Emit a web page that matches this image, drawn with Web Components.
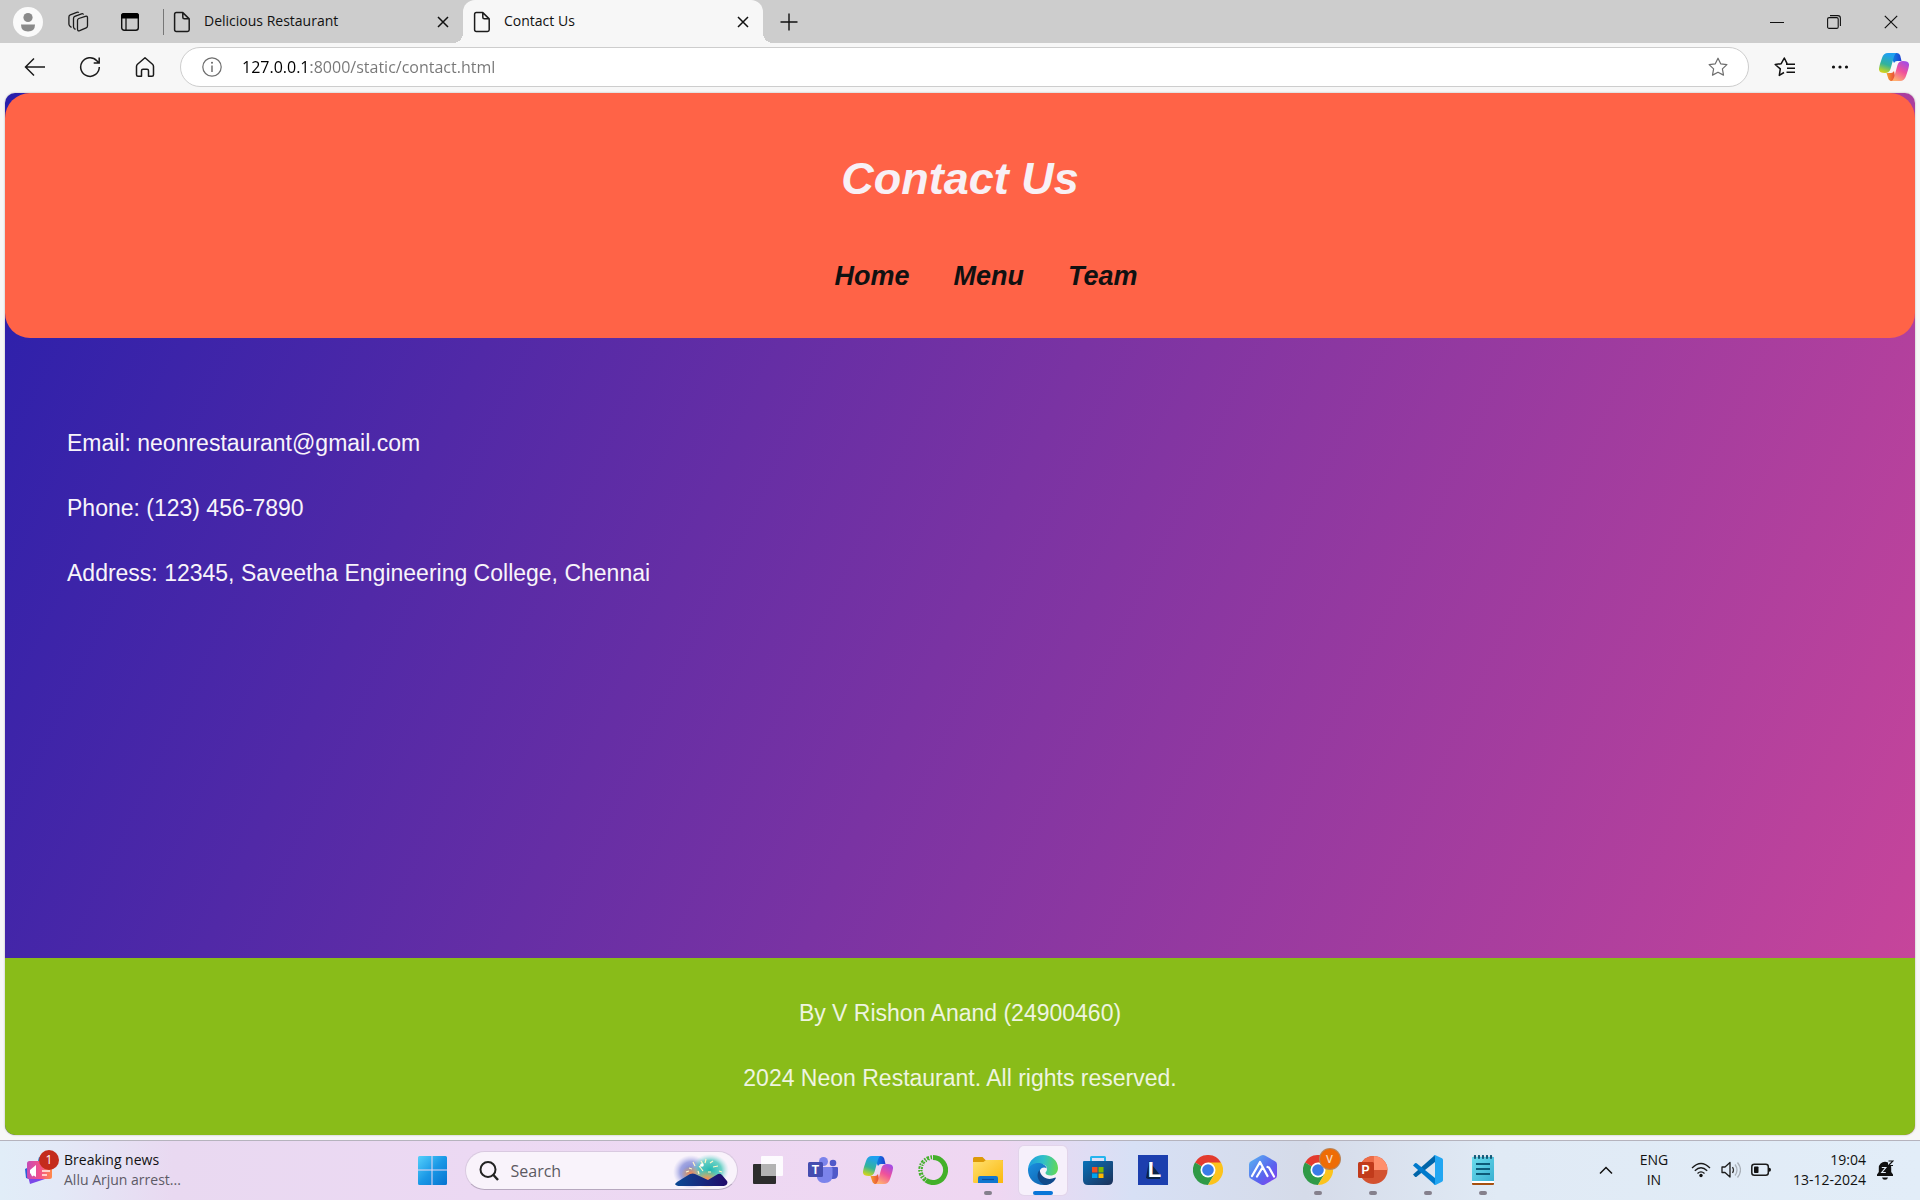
<!DOCTYPE html>
<html lang="en">
<head>
<meta charset="utf-8">
<title>Contact Us</title>
<style>
html,body{height:100%}
body{margin:0;font-family:"Open Sans","Noto Sans",sans-serif;color:#111;background:#f7f7f7;overflow:hidden}
</style>
</head>
<body>
<desktop-screen></desktop-screen>
<script>
const ICONS = {
  profile:[30,30,'<circle cx="15" cy="15" r="15" fill="#fafafa"/><circle cx="15" cy="10.500" r="4.600" fill="#8a8a8a"/><path d="M8 17.500h14q0 7-7 7t-7-7z" fill="#8a8a8a"/>'],
  collections:[22,22,'<g fill="none" stroke="#1b1b1b" stroke-width="1.300" stroke-linejoin="round"><path d="M10.500 9.500q0-1.500 1.300-2l6.500-2.200q2.200-.6 2.200 1.500v8q0 1.500-1.300 2l-6.500 2.800q-2.200.8-2.200-1.500z"/><path d="M8.500 18.500l-1.200-1q-.8-.7-.8-2v-8q0-1.500 1.300-2.100l6.700-2.600q1.600-.5 2 .8"/><path d="M4.500 16.500l-1.700-1.400q-.9-.8-.9-2V6q0-1.600 1.400-2.200l6.500-2.500q1.400-.4 2 .3"/></g>'],
  tabmenu:[20,20,'<rect x="1.700" y="1.700" width="16.600" height="16.600" rx="2.500" fill="none" stroke="#111" stroke-width="1.400"/><path d="M1 6.500V3.500Q1 1 3.500 1h13Q19 1 19 3.500v3z" fill="#000"/><path d="M6 6v12" stroke="#111" stroke-width="1.300"/>'],
  file:[18,22,'<path d="M3.300 1.600h6.500l6.400 6.300v10.800q0 1.700-1.700 1.700H3.300q-1.700 0-1.700-1.700V3.300q0-1.700 1.700-1.700zM9.800 1.800v4.500q0 1.500 1.500 1.500h4.700" fill="none" stroke="#1b1b1b" stroke-width="1.500" stroke-linejoin="round"/>'],
  close:[12,12,'<path d="M1 1l10 10M11 1L1 11" stroke="#111" stroke-width="1.500"/>'],
  plus:[18,18,'<path d="M9 .5v17M.5 9h17" stroke="#111" stroke-width="1.400"/>'],
  min:[14,14,'<path d="M0 7.500h14" stroke="#111"/>'],
  restore:[14,14,'<rect x=".6" y="2.600" width="10.600" height="10.800" rx="1.500" fill="none" stroke="#111" stroke-width="1.100"/><path d="M3 .6h7.800q2.600 0 2.600 2.600V11" fill="none" stroke="#111" stroke-width="1.100"/>'],
  winclose:[14,14,'<path d="M.8.8l12.400 12.400M13.200.8L.8 13.200" stroke="#111" stroke-width="1.200"/>'],
  back:[22,20,'<path d="M10 1.500L1.500 10l8.500 8.500M1.500 10H21" fill="none" stroke="#1b1b1b" stroke-width="1.500"/>'],
  reload:[22,22,'<path d="M20.300 11A9.300 9.300 0 1 1 17.800 4.700L20 7M20.200 1.500V7h-5.500" fill="none" stroke="#1b1b1b" stroke-width="1.500"/>'],
  home:[20,22,'<path d="M10 1.700l7.500 6.500q1 .9 1 2.200v8.300q0 1.500-1.500 1.500h-3.500v-5.500q0-1.500-1.500-1.500H8q-1.500 0-1.500 1.500v5.500H3q-1.500 0-1.500-1.500v-8.300q0-1.300 1-2.200z" fill="none" stroke="#1b1b1b" stroke-width="1.500" stroke-linejoin="round"/>'],
  info:[20,20,'<circle cx="10" cy="10" r="9.200" fill="none" stroke="#6e6e6e" stroke-width="1.200"/><path d="M10 8.500v6.500" stroke="#666" stroke-width="1.400"/><circle cx="10" cy="5.800" r="1" fill="#666"/>'],
  star:[20,20,'<path d="M10 1.200l2.700 5.600 6.200.8-4.500 4.300 1.100 6.200L10 15.200l-5.500 2.900 1.100-6.200L1.100 7.600l6.200-.8z" fill="none" stroke="#6e6e6e" stroke-width="1.200" stroke-linejoin="round"/>'],
  favs:[22,20,'<path d="M10 15.500L5.300 18.400l1-6.500L1.200 7.500l6-.8L10.300 1l2.800 5.700M12 7.200h9M13 11.200h8M12.500 15.200h8.500" fill="none" stroke="#111" stroke-width="1.500" stroke-linejoin="round"/>'],
  dots:[18,6,'<g fill="#111"><circle cx="2.500" cy="3" r="1.600"/><circle cx="9" cy="3" r="1.600"/><circle cx="15.500" cy="3" r="1.600"/></g>'],
  copilot:[30,28,'<defs><linearGradient id="a" x1=".3" y1="0" x2="0" y2="1"><stop offset="0" stop-color="#1fa0f0"/><stop offset=".5" stop-color="#33b39a"/><stop offset=".8" stop-color="#a9cf38"/><stop offset="1" stop-color="#f5d20a"/></linearGradient><linearGradient id="b" x1=".8" y1="0" x2=".3" y2="1"><stop offset="0" stop-color="#a04be8"/><stop offset=".5" stop-color="#f0519b"/><stop offset="1" stop-color="#ffb070"/></linearGradient><linearGradient id="c"><stop offset="0" stop-color="#0a9be8"/><stop offset="1" stop-color="#1d3fd1"/></linearGradient><linearGradient id="d"><stop offset="0" stop-color="#f6a030"/><stop offset="1" stop-color="#e6403a"/></linearGradient></defs><path d="M10 0h8q2.500 0 3.200 2.500L22.500 8H18q-2 0-3 2z" fill="url(#c)"/><path d="M7.500 20H12q2 0 3-2L17 28h-4q-3 0-3.800-2.800z" fill="url(#d)"/><path d="M9 0h8.500q-1.700.8-2.500 3.600L11.500 16q-1.200 4-5.500 4-6.500 0-6-4.500.3-2 1-4.500L3 5Q4.500 0 9 0z" fill="url(#a)"/><path d="M21 28h-8.500q1.700-.8 2.500-3.600L18.500 12q1.200-4 5.500-4 6.500 0 6 4.500-.3 2-1 4.500l-2 6q-1.500 5-6 5z" fill="url(#b)"/>'],
  news:[30,30,'<defs><linearGradient id="n"><stop offset="0" stop-color="#c54bb5"/><stop offset=".5" stop-color="#f2508c"/><stop offset="1" stop-color="#ff8a4a"/></linearGradient></defs><path d="M14 2l12 4-2 8-12-4z" fill="#1678d8"/><path d="M0 14l4-2v12l-3-1z" fill="#2a5fd8"/><path d="M3 21h19l1 2-18 6z" fill="#7b48e8"/><rect x="2" y="6" width="25" height="18" rx="2.500" fill="url(#n)"/><path d="M5 15l6-5v12l-6-4z" fill="#fff"/><path d="M6 17l2 4" stroke="#fff" stroke-width="2"/><path d="M17 16h8M17 20h5" stroke="#ffd2cc" stroke-width="1.800"/>'],
  start:[30,30,'<defs><linearGradient id="s" x1="0" y1="0" x2="1" y2="1"><stop offset="0" stop-color="#55d0fb"/><stop offset=".5" stop-color="#1a98e6"/><stop offset="1" stop-color="#0673d0"/></linearGradient></defs><path d="M2.500 1H14.500V14.500H1V2.500Q1 1 2.500 1zM15.500 1h13Q30 1 30 2.500v12H15.500zM1 15.500h13.500V30h-12Q1 30 1 28.500zM15.500 15.500H30v13q0 1.500-1.500 1.500h-13z" fill="url(#s)"/>'],
  search:[20,20,'<circle cx="9" cy="8.500" r="7.500" fill="none" stroke="#222" stroke-width="2"/><path d="M14 13.500l5 5.500" stroke="#222" stroke-width="2.400"/>'],
  fireworks:[56,34,'<defs><radialGradient id="f1"><stop offset="0" stop-color="#6f7bd0"/><stop offset=".6" stop-color="#8b92da" stop-opacity=".8"/><stop offset="1" stop-color="#b8b8ec" stop-opacity="0"/></radialGradient><radialGradient id="f2"><stop offset="0" stop-color="#23b8b0"/><stop offset=".6" stop-color="#45c8b8" stop-opacity=".8"/><stop offset="1" stop-color="#a0e0e0" stop-opacity="0"/></radialGradient><radialGradient id="f3"><stop offset="0" stop-color="#ff8a50"/><stop offset="1" stop-color="#e8b040" stop-opacity="0"/></radialGradient><linearGradient id="f4"><stop offset="0" stop-color="#0c4a94"/><stop offset="1" stop-color="#220b6a"/></linearGradient></defs><ellipse cx="18" cy="18" rx="18" ry="17" fill="url(#f1)"/><ellipse cx="37" cy="16" rx="19" ry="16" fill="url(#f2)"/><ellipse cx="34" cy="25" rx="12" ry="9" fill="url(#f3)"/><ellipse cx="18" cy="20" rx="10" ry="8" fill="url(#f3)"/><path d="M20 8l2 4M16 14l3 1M26 13l4-3M30 17l-3-4M33 5l-1 4M37 9l3-2M40 13l5-1M28 7l2 3M35 18h3M46 17l3 1M13 18l3-1M25 17l1 3" stroke="#fff6c8" stroke-width="1.200"/><circle cx="29" cy="11" r="1.800" fill="#fff"/><path d="M2 30l2-2 13-8q3-1 5 0l13 6 10-6q2-1 4 1l5 6q1 2 0 3-1 2-5 2H7q-4 0-5-2z" fill="url(#f4)"/>'],
  taskview:[30,30,'<rect x="0" y="9" width="23" height="20" rx="1" fill="#2d2d2d"/><rect x="8" y="1" width="22" height="20" rx="1" fill="#fff" opacity=".88"/><rect x="8" y="9" width="15" height="12" fill="#b3b3b3"/>'],
  teams:[30,30,'<circle cx="25" cy="8" r="3.300" fill="#5059c9"/><path d="M20 12h9q1 0 1 1v6q0 5-5 5h-3z" fill="#5059c9"/><circle cx="15.500" cy="6.500" r="4.500" fill="#7b83eb"/><path d="M10 12h13q1.500 0 1.500 1.500V20q0 8-8 8-6 0-7.500-5z" fill="#7b83eb"/><rect x="0" y="7" width="15" height="15" rx="1.500" fill="#454db0"/><text x="7.500" y="19" text-anchor="middle" font-size="12" font-weight="700" fill="#fff" font-family="Liberation Sans">T</text>'],
  anaconda:[30,30,'<path d="M15 2.500a12.500 12.500 0 1 1-7 22.800" fill="none" stroke="#43b02a" stroke-width="5"/><path d="M7.500 25A12.500 12.500 0 0 1 15 2.500" fill="none" stroke="#43b02a" stroke-width="4.500" stroke-dasharray="2.500 1.200 1.500 1"/><path d="M9 22A9.500 9.500 0 0 1 14 5" fill="none" stroke="#eed9f3" stroke-width="1.300" stroke-dasharray="2 1.500"/><path d="M6 23.500A12 12 0 0 1 13 3" fill="none" stroke="#eed9f3" stroke-width=".9" stroke-dasharray="1.500 2"/>'],
  explorer:[30,30,'<defs><linearGradient id="e" x1="0" y1="0" x2="1" y2="1"><stop offset="0" stop-color="#ffe070"/><stop offset="1" stop-color="#fbb80c"/></linearGradient></defs><path d="M0 3.500Q0 2 1.500 2h8l3 3H30v6H0z" fill="#dd9a08"/><path d="M0 7h10.500l2.500-2h16Q30 5 30 6v22H1.500Q0 28 0 27z" fill="url(#e)"/><path d="M5 28v-5q0-2 2-2h16q2 0 2 2v5z" fill="#1177d0"/><path d="M9 24.500h12" stroke="#0a4f9c" stroke-width="1.200"/>'],
  edge:[30,30,'<defs><linearGradient id="g1" x1="0" y1=".4" x2="1" y2=".5"><stop offset="0" stop-color="#1d9de0"/><stop offset=".5" stop-color="#30c0c8"/><stop offset="1" stop-color="#62d857"/></linearGradient><linearGradient id="g2" x1="0" y1="0" x2="1" y2="1"><stop offset="0" stop-color="#1b8fe0"/><stop offset="1" stop-color="#0c59a4"/></linearGradient></defs><path d="M0 14C1 5 7.500 0 15 0c9 0 15 6 15 13 0 5-3.500 7.500-7.500 7.500-3 0-5-1-5-2.500s1.500-1.500 1.500-4c0-2.500-2-5-6-5C7 9 1.500 11 0 17z" fill="url(#g1)"/><path d="M0 15c1.500-4.500 5.500-7 10.500-7 4 0 8 2.500 8.200 5.500-2-2-6.700-1-7.200 3.500-.5 4.500 3 8.500 8.500 8.500 4 0 6-1.500 7.500-2-2.500 4.500-7 6.500-12 6.500C6.500 30 0 23.500 0 15z" fill="url(#g2)"/><path d="M11.600 15c-4 4.500-2 12 4.900 14.900 5 0 9-2.500 11.200-6.500.3-.8-.3-1-1-.6-7 3.200-14-.8-15.100-7.800z" fill="#114a8b"/>'],
  store:[30,30,'<defs><linearGradient id="t" x1="0" y1="0" x2="1" y2="1"><stop offset="0" stop-color="#0a72ba"/><stop offset="1" stop-color="#1c3058"/></linearGradient></defs><path d="M8 8V2.500Q8 2 8.500 2h13q.5 0 .5.500V8" fill="none" stroke="#25b5ee" stroke-width="2"/><path d="M1 6h28q1 0 1 1v18q0 5-5 5H5q-5 0-5-5V7q0-1 1-1z" fill="url(#t)"/><path d="M9 12h5.500v5.500H9z" fill="#f25022"/><path d="M15.500 12H20.500v5.500h-5z" fill="#7fba00"/><path d="M9 18.500h5.500V23H9z" fill="#00a4ef"/><path d="M15.500 18.500h5V23h-5z" fill="#ffb900"/>'],
  lapp:[30,30,'<path d="M0 0h30v30H0z" fill="#1c3fae"/><path d="M11 6l-3 17 2 1h12v-4" fill="#0c2347"/><text x="16.500" y="22" text-anchor="middle" font-size="22" font-weight="700" fill="#fff" font-family="Liberation Sans">L</text>'],
  chrome:[30,30,'<path d="M15 15L2 7.500A15 15 0 0 1 28 7.500z" fill="#e33b2e"/><path d="M15 15L2 7.500A15 15 0 0 0 15 30l6.500-11z" fill="#2f9a47"/><path d="M15 7.500h13A15 15 0 0 1 15 30l6.500-11z" fill="#fcc31c"/><circle cx="15" cy="15" r="7.500" fill="#fff"/><circle cx="15" cy="15" r="5.800" fill="#3a7be8"/>'],
  aapp:[30,30,'<defs><linearGradient id="h" x1="0" y1="0" x2="1" y2="1"><stop offset="0" stop-color="#58b8f2"/><stop offset=".6" stop-color="#5a62ee"/><stop offset="1" stop-color="#8a3df0"/></linearGradient></defs><path d="M13 .6q2-1.100 4 0l10 5.600q2 1.100 2 3.300v11q0 2.200-2 3.300l-10 5.600q-2 1.100-4 0L3 23.800q-2-1.100-2-3.300v-11q0-2.200 2-3.300z" fill="url(#h)"/><path d="M4 21L12 7l7.500 14M9 21.500l5.500-9M19.500 12l1.500.5 5 9" fill="none" stroke="#fff" stroke-width="2.200" stroke-linecap="round" stroke-linejoin="round"/>'],
  ppt:[30,30,'<circle cx="15.500" cy="15" r="14" fill="#d35230"/><path d="M15.500 1a14 14 0 0 1 14 14h-14z" fill="#ff8f6b"/><path d="M15.500 1v14h-14a14 14 0 0 1 14-14z" fill="#ed6c47"/><rect x="0" y="7" width="16" height="16" rx="1.500" fill="#c13b1b"/><text x="7.500" y="19" text-anchor="middle" font-size="12" font-weight="700" fill="#fff" font-family="Liberation Sans">P</text>'],
  vscode:[30,30,'<path d="M0 19.500l2 2.300q.8.600 1.600 0L22 7V0z" fill="#0065a9"/><path d="M0 10.500l2-2.300q.8-.6 1.600 0L22 23v7z" fill="#007acc"/><path d="M21 .5q1-.8 2 0l6 2.800q1 .5 1 1.700v20q0 1.200-1 1.700l-6 3q-1.500.6-2.500-.5 1.500.5 1.500-1.200V2q0-1.500-1.500-1z" fill="#22a6f2"/>'],
  notepad:[30,30,'<defs><linearGradient id="o" x1="0" y1="0" x2="1" y2="1"><stop offset="0" stop-color="#6bdcec"/><stop offset="1" stop-color="#39b0d2"/></linearGradient></defs><path d="M4 26h22v3q0 1-1 1H5q-1 0-1-1z" fill="#a6500f"/><path d="M4 25h22v3H4z" fill="#fff"/><path d="M4 2h22v24H4z" fill="url(#o)"/><path d="M8 9h14M8 14h14M8 19h14" stroke="#0d5a78" stroke-width="1.800"/><path d="M7 1v2M11 1v2M15 1v2M19 1v2M23 1v2" stroke="#155a78" stroke-width="2.200" stroke-linecap="round"/>'],
  up:[14,10,'<path d="M1 8.500l6-6 6 6" fill="none" stroke="#111" stroke-width="1.500"/>'],
  wifi:[20,16,'<g fill="none" stroke="#1b1b1b" stroke-width="1.300"><path d="M1 6q9-9 18 0M3.800 8.800q6.200-6 12.400 0M6.500 11.500q3.500-3.300 7 0"/></g><circle cx="10" cy="13.500" r="1.700" fill="#111"/>'],
  volume:[20,18,'<path d="M1 6h3l5-4.500v14.500L4 11.500H1z" fill="none" stroke="#1b1b1b" stroke-width="1.300" stroke-linejoin="round"/><path d="M11.500 6q2 3 0 6" fill="none" stroke="#333" stroke-width="1.300"/><path d="M14 3.500q4 5.500 0 11M16.500 1.500q6 7.500 0 15" fill="none" stroke="#a9b0b8" stroke-width="1.300"/>'],
  battery:[20,14,'<rect x=".8" y="1.300" width="16.500" height="11" rx="2.500" fill="none" stroke="#1b1b1b" stroke-width="1.500"/><rect x="3" y="3.500" width="4.500" height="6.600" rx=".8" fill="#111"/><path d="M18 4.800q2 0 2 2t-2 2z" fill="#111"/>'],
  bell:[18,20,'<path d="M1 16h16v-1.500l-1.800-2.500V8A6.200 6.200 0 0 0 2.800 8v4L1 14.500zM6 17.500h6q-.5 2.300-3 2.300t-3-2.300z" fill="#111"/><path d="M12 0h6v6h-6z" fill="#e2edf8"/><path d="M12.500 1h4.500l-4.500 4.500h4.500" fill="none" stroke="#111" stroke-width="1.200"/><path d="M5.800 7.500h4l-4 5h4" fill="none" stroke="#e2edf8" stroke-width="1.200"/>']
};

function define(name, html, setup){
  customElements.define(name, class extends HTMLElement{
    constructor(){ super(); this.attachShadow({mode:'open'}); }
    connectedCallback(){
      this.shadowRoot.innerHTML = typeof html === 'function' ? html(this) : html;
      if(setup) setup(this);
    }
  });
}

const resetButton = 'button{font:inherit;color:inherit;background:none;border:0;padding:0;margin:0;display:flex;align-items:center;justify-content:center}';

define('ui-icon', el => {
  const [w,h,body] = ICONS[el.getAttribute('name')];
  return `<style>:host{display:block;flex:none}svg{display:block}</style><svg width="${w}" height="${h}" viewBox="0 0 ${w} ${h}" aria-hidden="true">${body}</svg>`;
});

define('icon-button', el => `<style>:host{display:flex;flex:none;width:55px;height:100%}${resetButton}button{width:100%;height:100%}</style>
  <button aria-label="${el.getAttribute('label')}"><ui-icon name="${el.getAttribute('icon')}"></ui-icon></button>`);

define('browser-tab', `<style>
  :host{display:flex;align-items:center;height:43px;width:300px;box-sizing:border-box;padding:0 14px 0 10px;position:relative;font-size:14px}
  :host([active]){background:#f7f7f7;border-radius:12px 12px 0 0}
  :host([active])::before,:host([active])::after{content:"";position:absolute;bottom:0;width:10px;height:10px}
  :host([active])::before{right:100%;background:radial-gradient(circle at 0 0,transparent 10px,#f7f7f7 10px)}
  :host([active])::after{left:100%;background:radial-gradient(circle at 100% 0,transparent 10px,#f7f7f7 10px)}
  ${resetButton}
  .title{flex:1;justify-content:flex-start;gap:13px;height:100%;white-space:nowrap;line-height:20px}
  .label{padding-bottom:2px}
  </style>
  <button class="title" role="tab"><ui-icon name="file"></ui-icon><span class="label"><slot></slot></span></button>
  <button aria-label="Close tab"><ui-icon name="close"></ui-icon></button>`);

define('tab-strip', `<style>
  :host{display:flex;align-items:center;height:43px;flex:none;background:#cdcdcd;padding-left:3px}
  .sep{width:1px;height:26px;background:#777;margin-left:7px}
  .tabs{display:flex;margin-right:-2px;margin-left:-1px}
  .gap{flex:1}
  .win{display:flex;height:100%;gap:2px;padding-right:2px}
  </style>
  <icon-button icon="profile" label="Profile" style="width:50px"></icon-button>
  <icon-button icon="collections" label="Workspaces" style="width:50px"></icon-button>
  <icon-button icon="tabmenu" label="Tab actions" style="width:53px"></icon-button>
  <div class="sep"></div>
  <div class="tabs"><browser-tab>Delicious Restaurant</browser-tab><browser-tab active>Contact Us</browser-tab></div>
  <icon-button icon="plus" label="New tab"></icon-button>
  <div class="gap"></div>
  <div class="win"><icon-button icon="min" label="Minimize"></icon-button><icon-button icon="restore" label="Restore"></icon-button><icon-button icon="winclose" label="Close"></icon-button></div>`);

define('address-bar', `<style>
  :host{display:flex;flex:1;min-width:0}
  label{display:flex;flex:1;align-items:center;height:40px;box-sizing:border-box;background:#fff;border:1px solid #cdcdcd;border-radius:20px;padding:0 3px 0 21px;gap:20px}
  input{flex:1;min-width:0;border:0;outline:0;padding:0;font:inherit;font-size:16px;height:24px;color:#111;background:linear-gradient(90deg,#000 69px,#767676 69px);-webkit-background-clip:text;background-clip:text;-webkit-text-fill-color:transparent}
  </style>
  <label><ui-icon name="info"></ui-icon><input aria-label="Address" value="127.0.0.1:8000/static/contact.html"><icon-button icon="star" label="Add to favorites"></icon-button></label>`);

define('browser-toolbar', `<style>
  :host{display:flex;align-items:center;height:48px;padding-bottom:2px;flex:none;background:#f7f7f7;padding-left:7px}
  nav,.tools{display:flex;height:100%}
  nav{margin-right:8px}.tools{margin-left:8px}
  </style>
  <nav><icon-button icon="back" label="Back"></icon-button><icon-button icon="reload" label="Refresh"></icon-button><icon-button icon="home" label="Home"></icon-button></nav>
  <address-bar></address-bar>
  <div class="tools"><icon-button icon="favs" label="Favorites"></icon-button><icon-button icon="dots" label="Settings and more"></icon-button><icon-button icon="copilot" label="Copilot" style="width:53px"></icon-button></div>`);

define('site-header', `<style>
  :host{display:block;background:#ff6347;border-radius:25px;padding:60px 0 46px;text-align:center;font-weight:700;font-style:italic}
  h1{margin:0 0 56px;font-size:45px;line-height:52px;color:#f8f0f5}
  ul{display:flex;justify-content:center;gap:44px;list-style:none;margin:0;padding:0 0 0 52px;font-size:27px;line-height:31px}
  a{color:#111;text-decoration:none}
  </style>
  <h1><slot></slot></h1>
  <nav><ul><li><a href="#home">Home</a></li><li><a href="#menu">Menu</a></li><li><a href="#team">Team</a></li></ul></nav>`);

define('contact-details', `<style>
  :host{display:flex;flex:1;flex-direction:column;gap:38px;padding:92px 62px 0;color:#f8f4fa;font-size:23px;line-height:27px}
  p{margin:0}
  </style>
  <p>Email: neonrestaurant@gmail.com</p><p>Phone: (123) 456-7890</p><p>Address: 12345, Saveetha Engineering College, Chennai</p>`);

define('site-footer', `<style>
  :host{display:flex;flex-direction:column;gap:38px;padding:42px 0 43px;background:#89bc19;color:#eef4e0;font-size:23px;line-height:27px;text-align:center}
  p{margin:0}
  </style>
  <p>By V Rishon Anand (24900460)</p><p>2024 Neon Restaurant. All rights reserved.</p>`);

define('contact-page', `<style>
  :host{display:flex;flex-direction:column;flex:1;min-height:0;margin:0 5px 5px;border-radius:10px;overflow:hidden;font-family:"Liberation Sans",Arial,sans-serif;background:linear-gradient(115deg,#281fab,#7a33a3 50%,#cc469a);box-shadow:0 0 2px #aaa}
  </style>
  <site-header>Contact Us</site-header><contact-details></contact-details><site-footer></site-footer>`);

define('task-app', el => `<style>
  :host{display:flex;width:55px;height:59px;flex:none;justify-content:center;position:relative}
  ${resetButton}
  button{width:48px;height:49px;box-sizing:border-box;padding-bottom:1px;margin:5px 0;border-radius:5px;position:relative}
  :host([active]) button{background:#f6f0fb;box-shadow:0 0 0 1px #e2d4ea}
  :host([running]) button::after{content:"";position:absolute;bottom:0;left:50%;width:8px;height:4px;margin-left:-4px;border-radius:2px;background:#85808c}
  :host([active]) button::after{width:20px;margin-left:-10px;background:#0a76d8}
  .badge{position:absolute;right:6px;top:8px;width:20px;height:20px;border-radius:50%;background:#ee6c05;color:#fbd9bd;font-size:11px;line-height:20px;font-weight:600;text-align:center;box-shadow:0 0 0 1px #b9855a}
  </style><button aria-label="${el.getAttribute('label')}"><ui-icon name="${el.getAttribute('icon')}"></ui-icon></button>${el.hasAttribute('badge')?`<span class="badge">${el.getAttribute('badge')}</span>`:''}`);

define('news-widget', `<style>
  :host{display:flex;align-items:center;justify-self:start;padding:0 0 2px 25px}
  ${resetButton}
  button{gap:9px;text-align:left}
  .pic{position:relative}
  .count{position:absolute;left:14px;top:-5px;width:20px;height:20px;border-radius:50%;background:#c42b1c;color:#fff;font-size:12px;line-height:20px;text-align:center}
  .text{display:block;font-size:14px;line-height:20px;white-space:nowrap}
  .sub{display:block;color:#5d5a66}
  </style>
  <button><span class="pic"><ui-icon name="news"></ui-icon><span class="count">1</span></span><span class="text">Breaking news<span class="sub">Allu Arjun arrest...</span></span></button>`);

define('task-search', `<style>
  :host{display:flex;align-items:center}
  label{display:flex;align-items:center;box-sizing:border-box;width:273px;height:39px;border:1px solid #d9c9e0;border-bottom-color:#b7a8bf;border-radius:20px;background:#f9f3fb;padding:0 8px 0 13px;gap:12px}
  input{flex:1;min-width:0;border:0;outline:0;background:none;padding:0;font:inherit;font-size:16px;color:#555}
  input::placeholder{color:#5c5962;opacity:1}
  </style>
  <label><ui-icon name="search"></ui-icon><input type="text" aria-label="Search" placeholder="Search"><ui-icon name="fireworks"></ui-icon></label>`);

define('system-tray', `<style>
  :host{display:flex;align-items:center;justify-self:end;padding:0 26px 2px 0;font-size:14px;line-height:20px}
  ${resetButton}
  .lang{margin-left:26px;width:30px;text-align:center;display:block}
  .status{margin-left:22px;gap:10px}
  .clock{margin-left:22px;display:block;text-align:right;white-space:nowrap}
  .bell{margin-left:10px}
  </style>
  <button aria-label="Show hidden icons"><ui-icon name="up"></ui-icon></button>
  <button class="lang">ENG<br>IN</button>
  <button class="status" aria-label="Network, sound, battery"><ui-icon name="wifi"></ui-icon><ui-icon name="volume"></ui-icon><ui-icon name="battery"></ui-icon></button>
  <button class="clock">19:04<br>13-12-2024</button>
  <button class="bell" aria-label="Notifications"><ui-icon name="bell"></ui-icon></button>`);

define('task-bar', `<style>
  :host{display:grid;grid-template-columns:1fr auto 1fr;height:59px;flex:none;border-top:1px solid #b5b3bd;background:linear-gradient(90deg,#e1edf8,#e3e9f7 3%,#e9d9f1 9%,#ecd9f3 25%,#efd7f2 52%,#d7e0f5 59%,#d5dbe9 68%,#e0eaf5 78%,#e2edf8)}
  .apps{display:flex;padding-right:5px}
  task-search{margin:0 3px 0 5px}
  </style>
  <news-widget></news-widget>
  <div class="apps">
  <task-app icon="start" label="Start"></task-app><task-search></task-search>
  <task-app icon="taskview" label="Task view"></task-app><task-app icon="teams" label="Teams"></task-app><task-app icon="copilot" label="Copilot"></task-app><task-app icon="anaconda" label="Anaconda"></task-app><task-app icon="explorer" label="File Explorer" running></task-app><task-app icon="edge" label="Edge" running active></task-app><task-app icon="store" label="Store"></task-app><task-app icon="lapp" label="L"></task-app><task-app icon="chrome" label="Chrome"></task-app><task-app icon="aapp" label="App"></task-app><task-app icon="chrome" label="Chrome profile" badge="V" running></task-app><task-app icon="ppt" label="PowerPoint" running></task-app><task-app icon="vscode" label="Visual Studio Code" running></task-app><task-app icon="notepad" label="Notepad" running></task-app>
  </div>
  <system-tray></system-tray>`);

define('desktop-screen', `<style>
  :host{display:flex;flex-direction:column;height:100vh}
  </style>
  <tab-strip></tab-strip><browser-toolbar></browser-toolbar><contact-page></contact-page><task-bar></task-bar>`);
</script>
</body>
</html>
